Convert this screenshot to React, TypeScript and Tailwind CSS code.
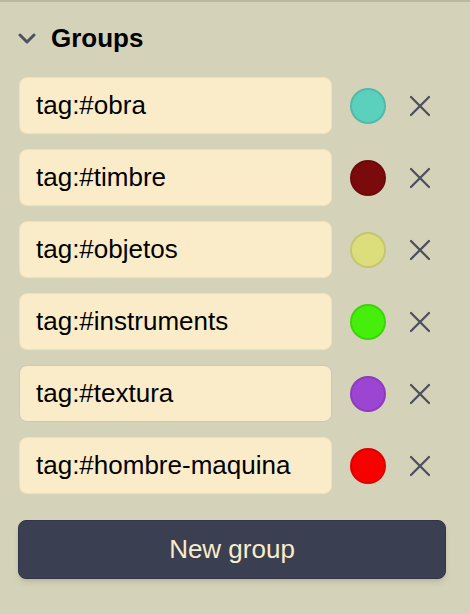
const groups = [
  { tag: 'tag:#obra', color: 'bg-[#5bd0bc]' },
  { tag: 'tag:#timbre', color: 'bg-[#7b0a0d]' },
  { tag: 'tag:#objetos', color: 'bg-[#dcdd7b]' },
  { tag: 'tag:#instruments', color: 'bg-[#45ee0b]' },
  { tag: 'tag:#textura', color: 'bg-[#9b45d2]', focused: true },
  { tag: 'tag:#hombre-maquina', color: 'bg-[#f70000]' },
]

function ChevronDown() {
  return (
    <svg width="18" height="11" viewBox="0 0 18 11" fill="none">
      <path d="M2 2l7 7 7-7" stroke="#4d5163" strokeWidth="3" strokeLinecap="round" strokeLinejoin="round" />
    </svg>
  )
}

function Cross() {
  return (
    <svg width="22" height="22" viewBox="0 0 22 22" fill="none">
      <path d="M2 2l18 18M20 2L2 20" stroke="#4a4e5f" strokeWidth="2.2" strokeLinecap="round" />
    </svg>
  )
}

export default function App() {
  return (
    <div className="h-[614px] w-[470px] border-t-2 border-[#bcb9a3] bg-[#d4d2b9] px-[18px] pt-[20px] font-['Liberation_Sans',Arial,sans-serif]">
      <div className="flex h-8 items-center">
        <ChevronDown />
        <span className="ml-[15px] text-[26px] leading-8 font-bold text-black">Groups</span>
      </div>

      <div className="mt-[23px] flex flex-col gap-[15px]">
        {groups.map((g) => (
          <div key={g.tag} className="ml-px flex items-center">
            <input
              readOnly
              defaultValue={g.tag}
              className={`h-[57px] w-[313px] rounded-lg border px-4 text-[26px] text-black outline-none bg-[#faecc9] ${
                g.focused ? 'border-[#c6c7cc]' : 'border-[#f1dfb6]'
              }`}
            />
            <div className={`ml-[18px] h-9 w-9 rounded-full border-2 border-black/10 ${g.color}`} />
            <button className="ml-[23px] flex h-[22px] w-[22px] items-center justify-center">
              <Cross />
            </button>
          </div>
        ))}
      </div>

      <button className="mt-[26px] h-[59px] w-[428px] rounded-lg border border-[#33364a] bg-[#3b3f52] text-[26px] text-[#faecc9] shadow-md">
        New group
      </button>
    </div>
  )
}
